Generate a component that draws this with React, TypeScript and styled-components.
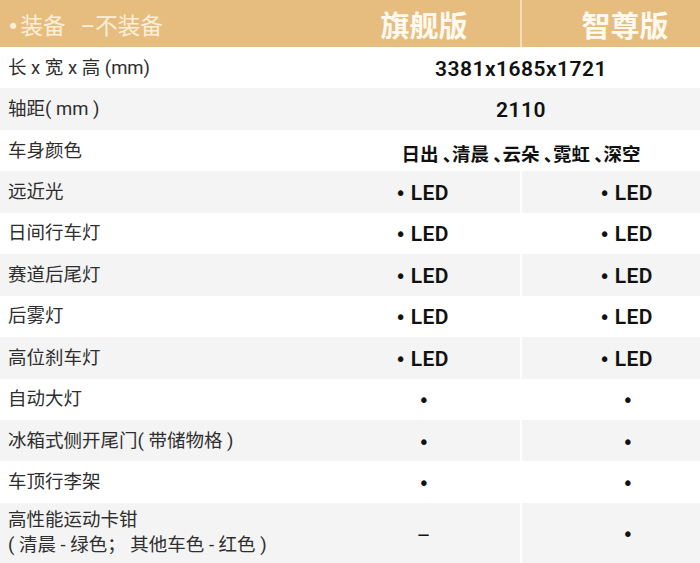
import styled, { createGlobalStyle } from "styled-components";

const GlobalStyle = createGlobalStyle`
  html, body {
    margin: 0;
    padding: 0;
    background: #ffffff;
  }
  body {
    font-family: Roboto, "Noto Sans CJK SC", sans-serif;
    overflow: hidden;
  }
`;

const Table = styled.div`
  width: 700px;
  height: 563px;
  overflow: hidden;
`;

const HeaderRow = styled.div`
  display: grid;
  grid-template-columns: 328px 192px 180px;
  height: 47px;
  background: #e6bd7f;
`;

const Legend = styled.div`
  display: flex;
  align-items: center;
  padding-left: 7px;
  font-size: 22.5px;
  color: #fcefd9;
  gap: 15px;
`;

const Mark = styled.span`
  font-family: "DejaVu Sans", sans-serif;
  font-size: 21px;
  margin-right: 1px;
`;

const HeaderCell = styled.div<{ $edge?: boolean }>`
  display: flex;
  align-items: center;
  justify-content: center;
  font-family: "Noto Sans CJK SC", sans-serif;
  font-size: 29px;
  font-weight: 700;
  color: #fff9ef;
  padding-left: ${(p) => (p.$edge ? "28px" : "0")};
  border-left: ${(p) => (p.$edge ? "2px solid #f6dfb9" : "none")};
`;

const Row = styled.div<{ $shade: boolean; $tall?: boolean }>`
  display: grid;
  grid-template-columns: 328px 192px 180px;
  height: ${(p) => (p.$tall ? "60px" : "41.45px")};
  background: ${(p) => (p.$shade ? "#f4f4f4" : "#ffffff")};
`;

const Label = styled.div`
  display: flex;
  flex-direction: column;
  justify-content: center;
  padding-left: 8px;
  padding-top: 1px;
  font-size: 18.5px;
  line-height: 25px;
  color: #2e2e2e;
`;

const Value = styled.div<{ $edge?: boolean; $span?: boolean }>`
  display: flex;
  align-items: center;
  justify-content: center;
  grid-column: ${(p) => (p.$span ? "2 / 4" : "auto")};
  padding-left: ${(p) => (p.$edge ? "30px" : p.$span ? "14px" : "0")};
  padding-right: ${(p) => (p.$edge || p.$span ? "0" : "4px")};
  padding-top: 2px;
  border-left: ${(p) => (p.$edge ? "2px solid #ffffff" : "none")};
  font-size: 21px;
  font-weight: 600;
  letter-spacing: 0.5px;
  color: #111111;
`;

const Colors = styled.span`
  font-family: "Noto Sans CJK SC", sans-serif;
  font-feature-settings: "halt";
  font-size: 18.5px;
  font-weight: 700;
  letter-spacing: 0;
  padding-top: 3px;
`;

const Dot = styled.span<{ $alone?: boolean }>`
  font-family: "DejaVu Sans", sans-serif;
  font-weight: 400;
  font-size: 19px;
  margin-right: ${(p) => (p.$alone ? "0" : "4px")};
  margin-left: ${(p) => (p.$alone ? "4px" : "0")};
`;

const Dash = styled.span`
  font-weight: 400;
  margin-left: 4px;
  padding-top: 4px;
`;

type Cell = "led" | "dot" | "none";

interface IRow {
  label: string[];
  span?: string;
  colors?: boolean;
  cells?: [Cell, Cell];
}

const rows: IRow[] = [
  { label: ["长 x 宽 x 高 (mm)"], span: "3381x1685x1721" },
  { label: ["轴距( mm )"], span: "2110" },
  { label: ["车身颜色"], span: "日出 、清晨 、云朵 、霓虹 、深空", colors: true },
  { label: ["远近光"], cells: ["led", "led"] },
  { label: ["日间行车灯"], cells: ["led", "led"] },
  { label: ["赛道后尾灯"], cells: ["led", "led"] },
  { label: ["后雾灯"], cells: ["led", "led"] },
  { label: ["高位刹车灯"], cells: ["led", "led"] },
  { label: ["自动大灯"], cells: ["dot", "dot"] },
  { label: ["冰箱式侧开尾门( 带储物格 )"], cells: ["dot", "dot"] },
  { label: ["车顶行李架"], cells: ["dot", "dot"] },
  {
    label: ["高性能运动卡钳", "( 清晨 - 绿色； 其他车色 - 红色 )"],
    cells: ["none", "dot"],
  },
];

const renderCell = (cell: Cell) => {
  if (cell === "led")
    return (
      <>
        <Dot>•</Dot>LED
      </>
    );
  if (cell === "dot") return <Dot $alone>•</Dot>;
  return <Dash>–</Dash>;
};

const App = () => {
  return (
    <>
      <GlobalStyle />
      <Table>
        <HeaderRow>
          <Legend>
            <span>
              <Mark>•</Mark>装备
            </span>
            <span>–不装备</span>
          </Legend>
          <HeaderCell>旗舰版</HeaderCell>
          <HeaderCell $edge>智尊版</HeaderCell>
        </HeaderRow>
        {rows.map((row, i) => (
          <Row key={i} $shade={i % 2 === 1} $tall={row.label.length > 1}>
            <Label>
              {row.label.map((line) => (
                <span key={line}>{line}</span>
              ))}
            </Label>
            {row.span ? (
              <Value $span>
                {row.colors ? <Colors>{row.span}</Colors> : row.span}
              </Value>
            ) : row.cells ? (
              <>
                <Value>{renderCell(row.cells[0])}</Value>
                <Value $edge>{renderCell(row.cells[1])}</Value>
              </>
            ) : null}
          </Row>
        ))}
      </Table>
    </>
  );
};

export default App;
